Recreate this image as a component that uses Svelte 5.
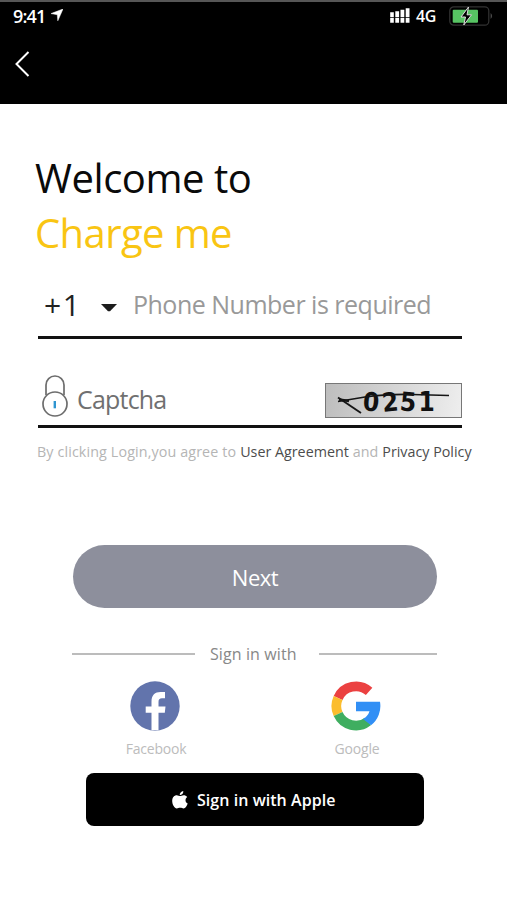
<script lang="ts">
    let phone: string = "";
    let captcha: string = "";
    const digits: string[] = ["0", "2", "5", "1"];
</script>

<div class="screen">
    <header>
        <div class="status">
            <span class="time">9:41</span>
            <svg class="location" width="12" height="12" viewBox="0 0 12 12">
                <path d="M12 0L0 4.600L6.300 5.700L6.800 11.800Z" fill="#fff" stroke="#fff" stroke-width=".5"/>
            </svg>
            <svg class="signal" width="20" height="16" viewBox="0 0 20 16" fill="#fff">
                <path d="M.2 4.300h3.600v4.900H.2zM5.300 3.300h3.800v5.900H5.300zM10.500 1.800h3.800v7.400h-3.800zM15.700.2h3.800v9h-3.800z"/>
                <path d="M.2 9.900h3.600v4.900H.2zM5.300 9.900h3.800v4.900H5.300zM10.500 9.900h3.800v4.900h-3.800zM15.700 9.900h3.800v4.900h-3.800z"/>
            </svg>
            <span class="network">4G</span>
            <svg class="battery" width="44" height="20" viewBox="0 0 44 20">
                <rect x=".8" y=".8" width="39" height="18.400" rx="4" fill="none" stroke="#333" stroke-width="1.200"/>
                <path d="M41.600 7q3 3 0 6z" fill="#4a4a4a"/>
                <rect x="3.700" y="3.700" width="25.300" height="13" rx="1" fill="#57c463"/>
                <path d="M19.500 1L12 11h4.500L14.800 19L22.500 8.800H18Z" fill="#000" stroke="#ddd" stroke-width="1"/>
            </svg>
        </div>
        <button class="back" aria-label="Back">
            <svg width="15" height="26" viewBox="0 0 15 26">
                <path d="M13.500 1L1.500 13L13.500 25" fill="none" stroke="#fff" stroke-width="2"/>
            </svg>
        </button>
    </header>

    <main>
        <h1>
            <span class="welcome">Welcome to</span>
            <span class="brand">Charge me</span>
        </h1>

        <div class="field phone">
            <span class="code">+1</span>
            <svg class="caret" width="16" height="8" viewBox="0 0 16 8">
                <path d="M0 0H16L9 7.300H7Z" fill="#1c1c1c"/>
            </svg>
            <input type="tel" placeholder="Phone Number is required" bind:value={phone}/>
        </div>

        <div class="field captcha">
            <svg class="lock" width="26" height="42" viewBox="0 0 26 42" fill="none" stroke="#6d6d6d" stroke-width="1.700">
                <path d="M4 20V10a9 9 0 0 1 18 0V20"/>
                <circle cx="13" cy="29" r="12"/>
                <path d="M12.800 26v7.300" stroke="#2f95d0" stroke-width="2.400"/>
            </svg>
            <input type="text" placeholder="Captcha" bind:value={captcha}/>
            <div class="code-image">
                <div class="digits">
                    {#each digits as digit}
                        <span>{digit}</span>
                    {/each}
                </div>
                <svg class="scratch" width="137" height="35" viewBox="0 0 137 35" fill="none" stroke="#151515">
                    <path d="M13 18.500L40 14Q60 11 87 11.500L124 12.500" stroke-width="1.700"/>
                    <path d="M13 14.500L36 30" stroke-width="1.900"/>
                    <path d="M14 16.500L24 18" stroke-width="2.500"/>
                </svg>
            </div>
        </div>

        <p class="terms">
            <span class="intro">By clicking Login,you agree to</span>
            <a class="agreement" href="#agreement">User Agreement</a>
            <span class="and">and</span>
            <a class="policy" href="#privacy">Privacy Policy</a>
        </p>

        <button class="next">Next</button>

        <div class="divider"><span>Sign in with</span></div>

        <div class="social">
            <button class="facebook">
                <svg width="50" height="50" viewBox="0 0 50 50">
                    <circle cx="25" cy="25" r="24.700" fill="#6274ac"/>
                    <path d="M21.500 49.300V31.800H15.700V25.500H21.500V20.500C21.500 14 25 11 30.500 11H35V17.300H32C29.500 17.300 28.500 18.500 28.500 21V25.500H35.500L34.800 31.800H28.500V49.300Z" fill="#fff"/>
                </svg>
                <span>Facebook</span>
            </button>
            <button class="google">
                <svg width="50" height="50" viewBox="0 0 50 50" fill="none" stroke-width="9.700">
                    <path d="M7.100 16.900A19.600 19.600 0 0 1 38.100 10.400" stroke="#eb4141"/>
                    <path d="M7.100 33.100A19.600 19.600 0 0 1 7.100 16.900" stroke="#fbbd2e"/>
                    <path d="M36.900 40.500A19.600 19.600 0 0 1 7.100 33.100" stroke="#3fae60"/>
                    <path d="M25 20.700H49A24.500 24.500 0 0 1 40 44.300L32 37.900Q37 35 38.500 30.200H25Z" fill="#318ff5" stroke="none"/>
                </svg>
                <span>Google</span>
            </button>
        </div>

        <button class="apple">
            <svg width="16" height="18" viewBox="0 0 16 18" fill="#fff">
                <path d="M11.300 0C11.500 2.300 9.900 4.200 7.700 4.200C7.500 2.200 9.300.3 11.300 0Z"/>
                <path d="M8 5C8.900 5 10 4.200 11.600 4.200C13 4.200 14.300 4.800 15.200 5.900C12.800 7.500 13 11.300 15.700 12.500C14.900 15 13.300 17.500 11.600 17.500C10.300 17.500 9.800 16.800 8.200 16.800C6.600 16.800 6 17.500 4.800 17.500C2.600 17.500.2 13.600.2 10C.2 6.300 2.400 4.200 4.700 4.200C6.200 4.200 7.200 5 8 5Z"/>
            </svg>
            <span>Sign in with Apple</span>
        </button>
    </main>
</div>

<style>
    :global(body) {
        background-color: #fff;
    }

    .screen {
        width: 507px;
        height: 900px;
        overflow: hidden;
        background-color: #fff;
        font-family: "Open Sans", "Noto Sans", sans-serif;
    }

    button {
        margin: 0;
        padding: 0;
        border: 0;
        background: transparent;
        font-family: inherit;
        cursor: pointer;
    }

    svg {
        display: block;
        flex: none;
    }

    header {
        box-sizing: border-box;
        height: 104px;
        border-top: 2px solid #565656;
        background-color: #000;
    }

    .status {
        display: flex;
        align-items: center;
        height: 28px;
        padding: 0 14px 0 13px;
        color: #fff;
        font-size: 18px;
        font-weight: 600;
        line-height: 28px;
    }

    .time {
        width: 34px;
        letter-spacing: -0.8px;
    }

    .location {
        margin: 0 auto 3px 4px;
    }

    .signal {
        margin-bottom: 1px;
    }

    .network {
        width: 22px;
        margin: 0 11px 1px 6px;
        font-size: 16px;
        letter-spacing: -0.4px;
    }

    .back {
        display: block;
        margin: 21px 0 0 15px;
    }

    main {
        padding: 46px 45px 0 38px;
    }

    h1 {
        display: flex;
        flex-direction: column;
        margin: 0 0 0 -3px;
        font-size: 40px;
        font-weight: 400;
        line-height: 55px;
        letter-spacing: -0.45px;
    }

    .welcome {
        color: #0a0a0a;
    }

    .brand {
        color: #f9c513;
        letter-spacing: -0.6px;
    }

    .field {
        display: flex;
        align-items: center;
        box-sizing: border-box;
        border-bottom: 3px solid #111;
    }

    input {
        flex: 1;
        min-width: 0;
        padding: 0;
        border: 0;
        outline: 0;
        background: transparent;
        font-family: inherit;
        font-size: 25px;
        letter-spacing: -0.5px;
        color: #222;
    }

    .field.phone {
        height: 65px;
        margin-top: 14px;
    }

    .code {
        width: 38px;
        margin: 0 0 2px 6px;
        font-size: 30px;
        letter-spacing: 1.5px;
        color: #222;
    }

    .caret {
        margin: 5px 16px 0 19px;
    }

    .phone input {
        margin-bottom: 2px;
    }

    .phone input::placeholder {
        color: #999;
        opacity: 1;
    }

    .field.captcha {
        height: 89px;
    }

    .lock {
        margin: 28px 9px 0 4px;
    }

    .captcha input {
        margin-top: 33px;
        letter-spacing: -0.8px;
    }

    .captcha input::placeholder {
        color: #707070;
        opacity: 1;
    }

    .code-image {
        position: relative;
        box-sizing: border-box;
        width: 137px;
        height: 35px;
        margin-top: 36px;
        border: 1px solid #777;
        background: linear-gradient(100deg, #bdbdbd, #eee);
    }

    .digits {
        display: flex;
        padding-left: 37px;
        font-family: "DejaVu Sans Condensed", "DejaVu Sans", sans-serif;
        font-stretch: condensed;
        font-size: 26px;
        font-weight: 700;
        line-height: 37px;
        color: #111;
    }

    .digits span {
        width: 18.5px;
    }

    .digits span:nth-child(odd) {
        transform: rotate(5deg);
    }

    .digits span:nth-child(2) {
        transform: rotate(-6deg);
    }

    .scratch {
        position: absolute;
        top: -1px;
        left: -1px;
    }

    .terms {
        display: flex;
        align-items: baseline;
        gap: 4px;
        margin: 14px -20px 0 -1px;
        font-size: 14.3px;
        line-height: 20px;
        white-space: nowrap;
        color: #b5b5b5;
    }

    .intro {
        letter-spacing: 0.12px;
    }

    .terms a {
        color: #4c4c4c;
        text-decoration: none;
    }

    .next {
        display: block;
        width: 364px;
        height: 63px;
        margin: 83px 0 0 35px;
        border-radius: 32px;
        background-color: #8d8f9c;
        font-size: 22px;
        letter-spacing: -0.5px;
        color: #fff;
    }

    .divider {
        display: flex;
        align-items: center;
        width: 365px;
        height: 24px;
        margin: 34px 0 0 34px;
        font-size: 16px;
        color: #888;
    }

    .divider::before,
    .divider::after {
        content: "";
        height: 2px;
        background-color: #bcbcbc;
    }

    .divider::before {
        width: 123px;
    }

    .divider::after {
        width: 118px;
    }

    .divider span {
        flex: 1;
        margin: -1px 0 0 15px;
        letter-spacing: 0.1px;
        white-space: nowrap;
    }

    .social {
        display: flex;
        justify-content: space-between;
        margin: 15px 63px 0 76px;
    }

    .social button {
        display: flex;
        flex-direction: column;
        align-items: center;
        width: 84px;
        font-size: 14px;
        line-height: 20px;
        letter-spacing: -0.2px;
        color: #bcbcbc;
    }

    .social span {
        margin-top: 8px;
    }

    .social svg {
        margin-right: 3px;
    }

    .apple {
        display: flex;
        align-items: center;
        box-sizing: border-box;
        width: 338px;
        height: 53px;
        margin: 14px 0 0 48px;
        padding: 1px 0 0 86px;
        border-radius: 8px;
        background-color: #000;
        font-size: 16px;
        font-weight: 600;
        color: #fff;
    }

    .apple span {
        margin-left: 9px;
        letter-spacing: 0.05px;
    }
</style>
